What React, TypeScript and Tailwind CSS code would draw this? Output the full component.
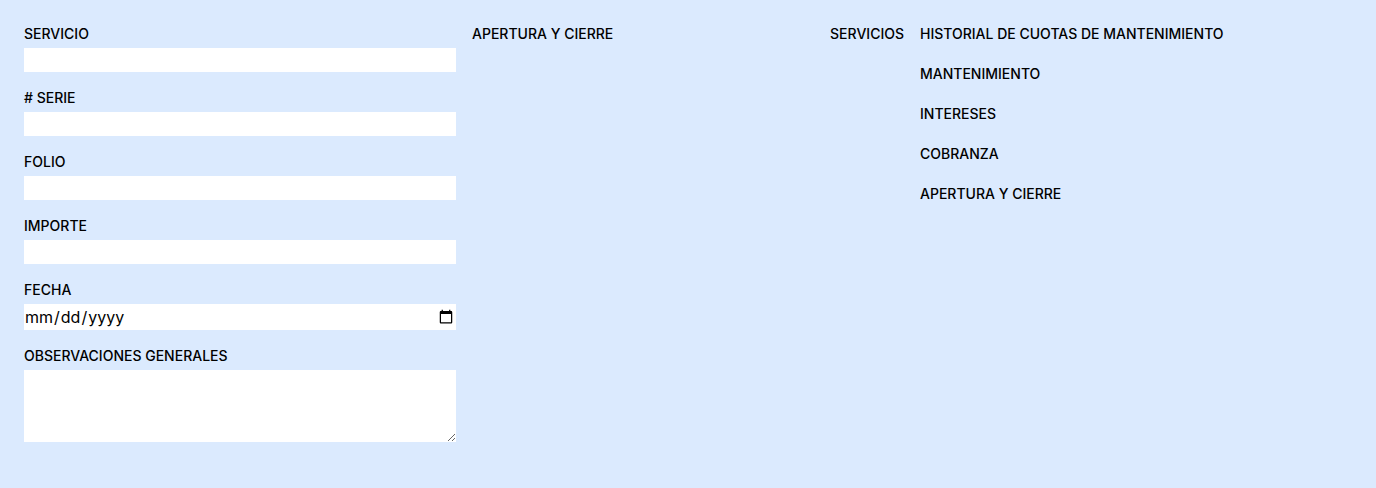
import React from "react";

const textFields = [
  { id: "servicio", label: "SERVICIO" },
  { id: "serie", label: "# SERIE" },
  { id: "folio", label: "FOLIO" },
  { id: "importe", label: "IMPORTE" },
];

const history = ["MANTENIMIENTO", "INTERESES", "COBRANZA", "APERTURA Y CIERRE"];

function Field({ id, label, children }: { id: string; label: string; children: React.ReactNode }) {
  return (
    <div className="flex flex-col gap-1">
      <label htmlFor={id} className="text-sm font-medium">
        {label}
      </label>
      {children}
    </div>
  );
}

export default function App() {
  return (
    <main className="grid min-h-screen grid-cols-3 gap-4 bg-[#dbeafe] p-6 font-['Inter',sans-serif] text-black">
      <form className="flex flex-col gap-4">
        {textFields.map((f) => (
          <Field key={f.id} id={f.id} label={f.label}>
            <input id={f.id} type="text" className="h-6 w-full bg-white" />
          </Field>
        ))}
        <Field id="fecha" label="FECHA">
          <input id="fecha" type="date" className="h-[26px] w-full bg-white" />
        </Field>
        <Field id="observaciones" label="OBSERVACIONES GENERALES">
          <textarea id="observaciones" rows={3} className="w-full bg-white" />
        </Field>
      </form>
      <section className="flex justify-between text-sm font-medium">
        <h2>APERTURA Y CIERRE</h2>
        <h2>SERVICIOS</h2>
      </section>
      <section className="flex flex-col gap-5 text-sm font-medium">
        <h2>HISTORIAL DE CUOTAS DE MANTENIMIENTO</h2>
        {history.map((h) => (
          <h3 key={h}>{h}</h3>
        ))}
      </section>
    </main>
  );
}
